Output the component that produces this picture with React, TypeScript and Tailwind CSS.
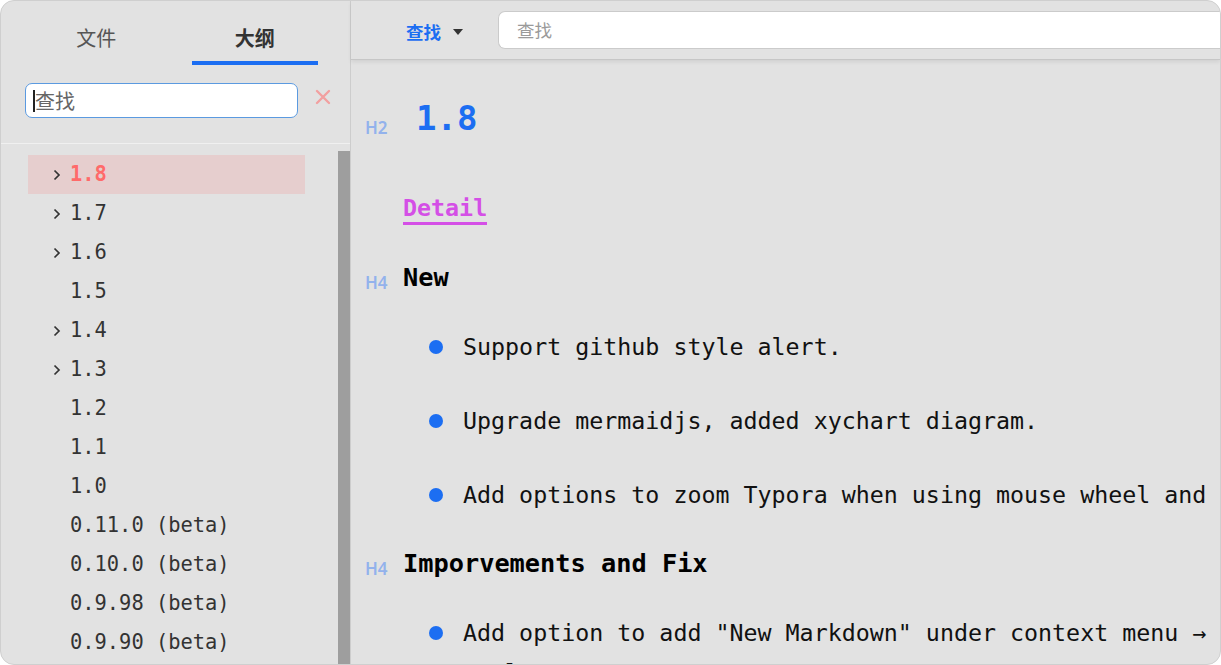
import { useState } from "react";

const mono = { fontFamily: '"DejaVu Sans Mono", "Liberation Mono", monospace' };

const outline = [
  { title: "1.8", children: true },
  { title: "1.7", children: true },
  { title: "1.6", children: true },
  { title: "1.5", children: false },
  { title: "1.4", children: true },
  { title: "1.3", children: true },
  { title: "1.2", children: false },
  { title: "1.1", children: false },
  { title: "1.0", children: false },
  { title: "0.11.0 (beta)", children: false },
  { title: "0.10.0 (beta)", children: false },
  { title: "0.9.98 (beta)", children: false },
  { title: "0.9.90 (beta)", children: false },
];

const Chevron = () => (
  <svg width="8" height="12" viewBox="0 0 8 12" fill="none">
    <path d="M1.5 1.5 6 6l-4.5 4.5" stroke="#333" strokeWidth="1.7" />
  </svg>
);

const Bullet = ({ children, nowrap }: { children: React.ReactNode; nowrap?: boolean }) => (
  <li className="flex items-start pl-[26px]">
    <span className="mt-[13px] h-[14px] w-[14px] shrink-0 rounded-full bg-[#1c6ef2]" />
    <span
      className={`ml-[20px] w-[790px] shrink-0 text-[23.3px] leading-[40px] text-[#111] ${nowrap ? "whitespace-nowrap" : ""}`}
      style={mono}
    >
      {children}
    </span>
  </li>
);

const Sidebar = () => {
  const [tab] = useState("outline");
  return (
    <aside
      className="flex w-[350px] shrink-0 flex-col border-r border-[#cdcdcd]"
      style={{ fontFamily: '"Noto Sans CJK SC", "Noto Sans", sans-serif' }}
    >
      {/* Tabs */}
      <div className="grid h-[64px] grid-cols-2 px-[16px]">
        <div className="flex flex-col items-center pt-[23px]">
          <span className="text-[20px] leading-[28px] text-[#555]">文件</span>
          <div className="mt-[9px] h-[4px] w-[126px]" />
        </div>
        <div className="flex flex-col items-center pt-[23px]">
          <span className="text-[20px] font-bold leading-[28px] text-[#333]">大纲</span>
          <div className={`mt-[9px] h-[4px] w-[126px] ${tab === "outline" ? "bg-[#1c6ef2]" : ""}`} />
        </div>
      </div>

      {/* Filter */}
      <div className="flex items-center border-b border-[#f0f0f0] pb-[25px] pl-[24px] pt-[18px]">
        <div className="flex h-[35px] w-[273px] items-center rounded-[7px] border border-[#5b9ae0] bg-white pl-[7px]">
          <span className="h-[22px] w-[2px] bg-[#222]" />
          <span className="text-[20px] leading-none text-[#666]">查找</span>
        </div>
        <svg className="-mt-[7px] ml-[17px]" width="16" height="16" viewBox="0 0 16 16">
          <path d="M2 2l12 12M14 2 2 14" stroke="#f2a0a0" strokeWidth="2.4" strokeLinecap="round" />
        </svg>
      </div>

      {/* Outline list */}
      <div className="flex min-h-0 flex-1 overflow-hidden">
        <div className="flex-1 pl-[27px] pt-[11px]">
          {outline.map((item, i) => (
            <div
              key={item.title}
              className={`flex h-[39px] w-[277px] items-center pl-[25px] ${i === 0 ? "bg-[#e6cece]" : ""}`}
            >
              <span className="flex w-[17px] items-center">{item.children && <Chevron />}</span>
              <span
                className={`text-[20.4px] leading-none ${i === 0 ? "font-bold text-[#ff6a6a]" : "text-[#333]"}`}
                style={mono}
              >
                {item.title}
              </span>
            </div>
          ))}
        </div>
        <div className="mt-[7px] w-[12px] bg-[#9e9e9e]" />
      </div>
    </aside>
  );
};

const Label = ({ text, className }: { text: string; className: string }) => (
  <span
    className={`w-[38px] shrink-0 text-[17px] font-semibold leading-[20px] text-[#93b2ec] ${className}`}
    style={{ fontFamily: '"Noto Sans", "Liberation Sans", sans-serif' }}
  >
    {text}
  </span>
);

export default function App() {
  return (
    <div className="h-[665px] w-[1221px] bg-white">
      <div className="flex h-full overflow-hidden rounded-[14px] border border-[#cfcfcf] bg-[#e2e2e2]">
        <Sidebar />

        <main className="flex min-w-0 flex-1 flex-col">
          {/* Find toolbar */}
          <div
            className="relative z-10 flex h-[59px] shrink-0 items-center border-b border-[#c6c6c6] pl-[55px] shadow-[0_2px_4px_rgba(0,0,0,0.08)]"
            style={{ fontFamily: '"Noto Sans CJK SC", "Noto Sans", sans-serif' }}
          >
            <span className="mt-[4px] text-[17.5px] font-bold text-[#1c6ef2]">查找</span>
            <svg className="ml-[12px] mt-[4px]" width="10" height="6" viewBox="0 0 10 6">
              <path d="M0 0h10L5 6z" fill="#333" />
            </svg>
            <div className="ml-[35px] flex h-[38px] flex-1 items-center rounded-l-[7px] border border-r-0 border-[#cbcbcb] bg-white pl-[18px]">
              <span className="text-[17.5px] text-[#9a9a9a]">查找</span>
            </div>
          </div>

          {/* Document */}
          <div className="min-h-0 flex-1 overflow-hidden pl-[14px] pt-[33px]">
            <div className="flex items-start">
              <Label text="H2" className="mt-[25px]" />
              <h2 className="ml-[13px] text-[34px] font-bold leading-[50px] text-[#1c6ef2]" style={mono}>
                1.8
              </h2>
            </div>

            <div className="mt-[51px] pl-[38px]">
              <span
                className="inline-block border-b-[3px] border-[#d44fe6] text-[23.3px] font-bold leading-[28px] text-[#d44fe6]"
                style={mono}
              >
                Detail
              </span>
            </div>

            <div className="mt-[33px] flex items-start">
              <Label text="H4" className="mt-[15px]" />
              <h4 className="text-[25.3px] font-bold leading-[40px] text-black" style={mono}>
                New
              </h4>
            </div>

            <ul className="mt-[29px] flex flex-col gap-[34px] pl-[38px]">
              <Bullet>Support github style alert.</Bullet>
              <Bullet>Upgrade mermaidjs, added xychart diagram.</Bullet>
              <Bullet nowrap>Add options to zoom Typora when using mouse wheel and</Bullet>
            </ul>

            <div className="mt-[29px] flex items-start">
              <Label text="H4" className="mt-[15px]" />
              <h4 className="text-[25.3px] font-bold leading-[40px] text-black" style={mono}>
                Imporvements and Fix
              </h4>
            </div>

            <ul className="mt-[29px] flex flex-col pl-[38px]">
              <Bullet>Add option to add "New Markdown" under context menu → Explorer</Bullet>
            </ul>
          </div>
        </main>
      </div>
    </div>
  );
}
